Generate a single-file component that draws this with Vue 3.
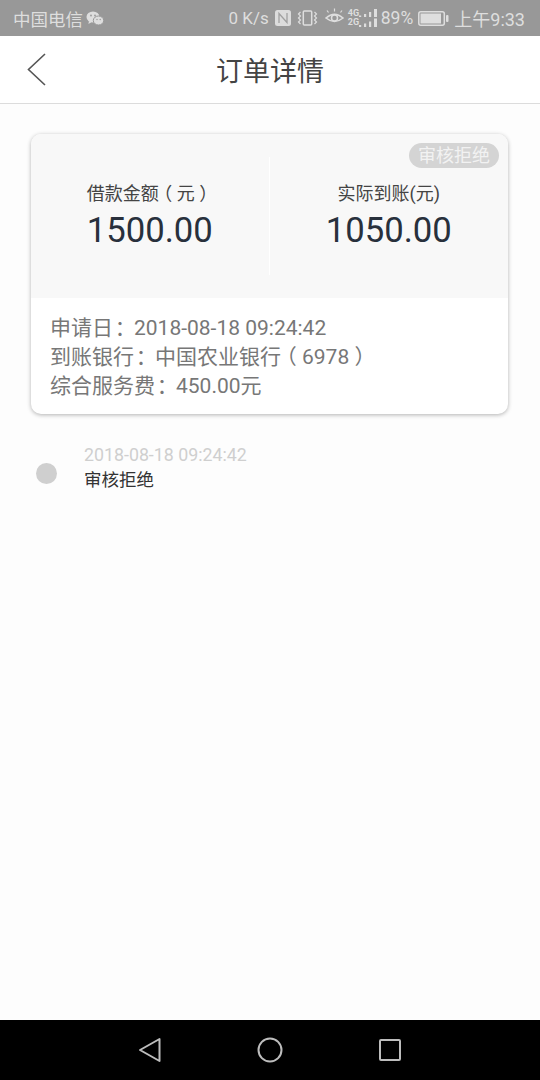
<script setup>
const amounts = [
  { value: '1500.00', parts: ['借款金额', '（', '元', '）'] },
  { value: '1050.00', parts: ['实际到账(元)'] }
]
const details = [
  ['申请日', '：', '2018-08-18 09:24:42'],
  ['到账银行', '：', '中国农业银行', '（', '6978', '）'],
  ['综合服务费', '：', '450.00元']
]
const partClass = (s) => ({
  colon: s === '：',
  paren: s === '（' || s === '）'
})
</script>

<template>
  <div class="page">
    <div class="status">
      <div class="carrier">
        <span>中国电信</span>
        <svg class="wechat" width="18" height="15" viewBox="0 0 18 15">
          <ellipse cx="7" cy="6" rx="6.5" ry="5.5" fill="#dedede" />
          <path d="M3 10l-.6 3 3-1.8z" fill="#dedede" />
          <ellipse cx="12.5" cy="9.5" rx="5.2" ry="4.5" fill="#dedede" stroke="#989898" />
          <circle cx="5" cy="4.5" r=".9" fill="#989898" />
          <circle cx="9" cy="4.5" r=".9" fill="#989898" />
          <circle cx="11" cy="8.5" r=".7" fill="#989898" />
          <circle cx="14.2" cy="8.5" r=".7" fill="#989898" />
        </svg>
      </div>
      <div class="indicators">
        <span class="speed">0 K/s</span>
        <svg width="16" height="16" viewBox="0 0 16 16">
          <rect width="16" height="16" rx="2.5" fill="#dcdcdc" />
          <path d="M4 13V3.500l8 9V3" fill="none" stroke="#a0a0a0" stroke-width="1.300" />
        </svg>
        <svg width="21" height="16" viewBox="0 0 21 16" class="vibrate">
          <rect x="6.300" y="1" width="8.400" height="14" rx="1" fill="none" stroke="#dedede" stroke-width="1.500" />
          <path d="M3.500 2L1.500 4l2 2-2 2 2 2-2 2 2 2M17.500 2l2 2-2 2 2 2-2 2 2 2-2 2" fill="none" stroke="#dedede" stroke-width="1.200" />
        </svg>
        <svg width="19" height="18" viewBox="0 0 19 18" class="eye">
          <path d="M1 11Q9.500 3.500 18 11Q9.500 18 1 11z" fill="none" stroke="#dedede" stroke-width="1.600" />
          <circle cx="9.500" cy="11" r="3" fill="none" stroke="#dedede" stroke-width="1.500" />
          <path d="M3.500 5.500L2 3.500M9.500 4.500V1.500M15.500 5.500L17 3.500" stroke="#dedede" stroke-width="1.200" />
        </svg>
        <div class="signal">
          <div class="net"><span>4G</span><span>2G</span></div>
          <svg width="19" height="18" viewBox="0 0 19 18">
            <path d="M0 6.500h2.200V8H0zM5 5h2.200v3H5zM10 3h2.200v5H10zM15 0h3v8h-3zM0 16h2.200v2H0zM5 14.500h2.200V18H5zM10 12.500h2.200V18H10zM15 9.500h3V18h-3z" fill="#dedede" />
          </svg>
        </div>
        <span class="percent">89%</span>
        <svg width="31" height="15" viewBox="0 0 31 15" class="battery">
          <rect x=".8" y=".8" width="25.500" height="13.400" rx="2" fill="none" stroke="#dedede" stroke-width="1.500" />
          <rect x="2.500" y="2.500" width="20.500" height="10" fill="#dedede" />
          <rect x="28" y="4" width="2.500" height="7" rx="1" fill="#dedede" />
        </svg>
        <span class="clock">上午9:33</span>
      </div>
    </div>

    <header class="header">
      <svg class="back" width="20" height="36" viewBox="0 0 20 36">
        <path d="M18 2L1.500 17.500 18 33" fill="none" stroke="#555" stroke-width="1.600" />
      </svg>
      <h1 class="title">订单详情</h1>
    </header>

    <main class="content">
      <section class="card">
        <span class="badge">审核拒绝</span>
        <div class="summary">
          <div v-for="item in amounts" :key="item.value" class="amount">
            <div class="amount-label"><span v-for="(p, i) in item.parts" :key="i" :class="partClass(p)">{{ p }}</span></div>
            <div class="amount-value">{{ item.value }}</div>
          </div>
        </div>
        <div class="details">
          <div v-for="(line, n) in details" :key="n" class="detail-line"><span v-for="(p, i) in line" :key="i" :class="partClass(p)">{{ p }}</span></div>
        </div>
      </section>

      <section class="timeline">
        <span class="dot"></span>
        <div>
          <div class="time">2018-08-18 09:24:42</div>
          <div class="event">审核拒绝</div>
        </div>
      </section>
    </main>

    <nav class="nav">
      <svg width="24" height="26" viewBox="0 0 24 26">
        <path d="M21.500 2v22L2 13z" fill="none" stroke="#bdbdbd" stroke-width="2" stroke-linejoin="round" />
      </svg>
      <svg width="26" height="26" viewBox="0 0 26 26">
        <circle cx="13" cy="13" r="11.500" fill="none" stroke="#bdbdbd" stroke-width="2" />
      </svg>
      <svg width="24" height="24" viewBox="0 0 24 24">
        <rect x="2" y="2" width="20" height="20" rx="1" fill="none" stroke="#bdbdbd" stroke-width="2" />
      </svg>
    </nav>
  </div>
</template>

<style scoped>
.page {
  display: flex;
  flex-direction: column;
  width: 540px;
  height: 1080px;
  background: #fdfdfd;
  font-family: Roboto, "Noto Sans CJK SC", sans-serif;
}
.status {
  display: flex;
  flex: none;
  align-items: center;
  justify-content: space-between;
  height: 36px;
  padding: 0 15px 0 13px;
  box-sizing: border-box;
  background: #989898;
  color: #dedede;
  font-size: 17.5px;
}
.carrier,
.indicators {
  display: flex;
  align-items: center;
}
.wechat {
  margin-left: 3px;
}
.speed {
  margin-right: 6px;
  font-size: 17px;
}
.vibrate {
  margin-left: 6px;
}
.eye {
  margin-left: 7px;
  margin-top: -4px;
}
.signal {
  display: flex;
  align-items: center;
  margin-left: 4px;
}
.net {
  display: flex;
  flex-direction: column;
  width: 11px;
  font-size: 9px;
  font-weight: 700;
  line-height: 9px;
}
.percent {
  margin-left: 3px;
  font-size: 17.500px;
}
.battery {
  margin-left: 5px;
}
.clock {
  margin-left: 5px;
  font-size: 18px;
}
.header {
  display: flex;
  flex: none;
  position: relative;
  align-items: center;
  justify-content: center;
  height: 68px;
  box-sizing: border-box;
  border-bottom: 1px solid #dcdcdc;
  background: #fff;
}
.back {
  position: absolute;
  left: 27px;
  top: 16px;
}
.title {
  margin: 0;
  color: #444;
  font-size: 27px;
  font-weight: 400;
}
.content {
  flex: 1;
  padding: 30px 32px 0 31px;
}
.card {
  position: relative;
  overflow: hidden;
  height: 280px;
  border-radius: 10px;
  background: #fff;
  box-shadow: 0 1px 4px rgba(0, 0, 0, 0.3);
}
.badge {
  position: absolute;
  top: 9px;
  right: 9px;
  width: 90px;
  height: 25px;
  border-radius: 13px;
  background: #d4d4d4;
  color: #f2f2f2;
  font-size: 18px;
  line-height: 25px;
  text-align: center;
}
.summary {
  display: grid;
  grid-template-columns: 1fr 1fr;
  height: 164px;
  background: #f8f8f8;
}
.amount {
  box-sizing: border-box;
  height: 118px;
  margin-top: 23px;
  padding-top: 22px;
  text-align: center;
}
.amount:first-child {
  border-right: 1px solid #fff;
}
.amount-label {
  height: 30px;
  color: #444;
  font-size: 18px;
  line-height: 30px;
}
.amount-value {
  color: #28303c;
  font-size: 34.700px;
  line-height: 42px;
}
.colon {
  padding: 0 0.42em 0 0.08em;
  font-feature-settings: "halt";
}
.paren {
  padding: 0 0.25em;
  font-feature-settings: "halt";
}
.details {
  padding: 16px 19px 0;
  color: #777;
  font-size: 21px;
}
.detail-line {
  height: 29px;
  line-height: 29px;
}
.timeline {
  display: flex;
  align-items: center;
  margin-top: 29px;
  padding-left: 5px;
}
.dot {
  width: 21px;
  height: 21px;
  margin: 10px 27px 0 0;
  border-radius: 50%;
  background: #cfcfcf;
}
.time {
  color: #cfcfcf;
  font-size: 17.800px;
  line-height: 24px;
}
.event {
  color: #333;
  font-size: 17.500px;
  line-height: 26px;
}
.nav {
  display: flex;
  flex: none;
  align-items: center;
  justify-content: space-between;
  height: 60px;
  padding: 0 138px;
  box-sizing: border-box;
  background: #000;
}
</style>
